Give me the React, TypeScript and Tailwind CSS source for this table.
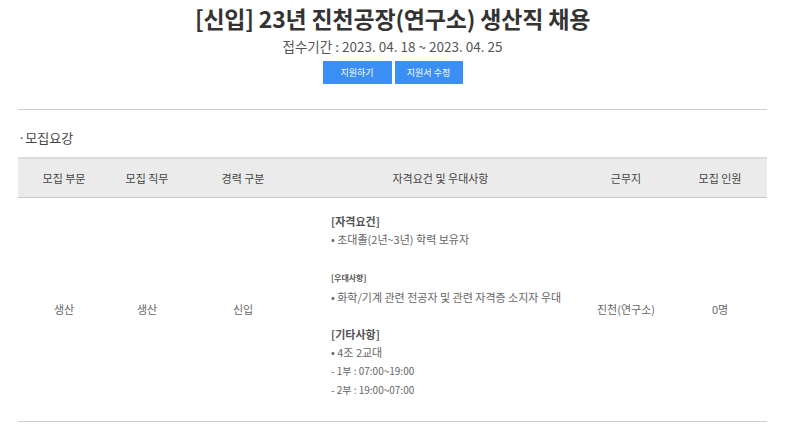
import React from 'react';

const font = { fontFamily: '"Noto Sans CJK KR", "Noto Sans", sans-serif' };

export default function App() {
  return (
    <div className="w-[800px] h-[428px] bg-white overflow-hidden text-[#555]" style={font}>
      <div className="mx-[18px] w-[749px]">
        <div className="flex flex-col items-center">
          <h1 className="h-[36px] leading-[36px] text-[23px] font-bold text-[#333] tracking-[-0.2px]">
            [신입] 23년 진천공장(연구소) 생산직 채용
          </h1>
          <p className="h-[20px] leading-[20px] text-[13.5px] text-[#555]">접수기간 : 2023. 04. 18 ~ 2023. 04. 25</p>
          <div className="mt-[5px] flex gap-[3px]">
            <button className="w-[69px] h-[23px] bg-[#3b8ef3] text-white text-[9px]">지원하기</button>
            <button className="w-[68px] h-[23px] bg-[#3b8ef3] text-white text-[9px]">지원서 수정</button>
          </div>
        </div>

        <div className="mt-[25px] border-t border-[#cfcfcf]" />

        <h2 className="mt-[18px] h-[20px] leading-[20px] text-[13px] text-[#444]">·모집요강</h2>

        <table className="mt-[9px] w-full table-fixed border-collapse text-[11px]">
          <colgroup>
            <col className="w-[92px]" />
            <col className="w-[74px]" />
            <col className="w-[118px]" />
            <col className="w-[277px]" />
            <col className="w-[94px]" />
            <col className="w-[94px]" />
          </colgroup>
          <thead>
            <tr className="h-[39px] bg-[#ebebeb] border-t-2 border-[#dcdcdc] border-b border-b-[#c8c8c8] text-[#444]">
              <th className="font-normal">모집 부문</th>
              <th className="font-normal">모집 직무</th>
              <th className="font-normal">경력 구분</th>
              <th className="font-normal">자격요건 및 우대사항</th>
              <th className="font-normal">근무지</th>
              <th className="font-normal">모집 인원</th>
            </tr>
          </thead>
          <tbody>
            <tr className="h-[224px] border-b border-[#cfcfcf] text-[#666]">
              <td className="text-center">생산</td>
              <td className="text-center">생산</td>
              <td className="text-center">신입</td>
              <td className="pl-[29px] pb-[8px] text-left align-middle">
                <div className="leading-[18px]">
                  <p className="text-[#555] font-bold">[자격요건]</p>
                  <p>• 초대졸(2년~3년) 학력 보유자</p>
                  <p className="h-[21px]" />
                  <p className="text-[8px] text-[#555] font-bold">[우대사항]</p>
                  <p className="mt-[1px]">• 화학/기계 관련 전공자 및 관련 자격증 소지자 우대</p>
                  <p className="h-[19px]" />
                  <p className="text-[#555] font-bold">[기타사항]</p>
                  <p>• 4조 2교대</p>
                  <p className="mt-[1px] text-[10px]">- 1부 : 07:00~19:00</p>
                  <p className="mt-[1px] text-[10px]">- 2부 : 19:00~07:00</p>
                </div>
              </td>
              <td className="text-center">진천(연구소)</td>
              <td className="text-center">0명</td>
            </tr>
          </tbody>
        </table>
      </div>
    </div>
  );
}
